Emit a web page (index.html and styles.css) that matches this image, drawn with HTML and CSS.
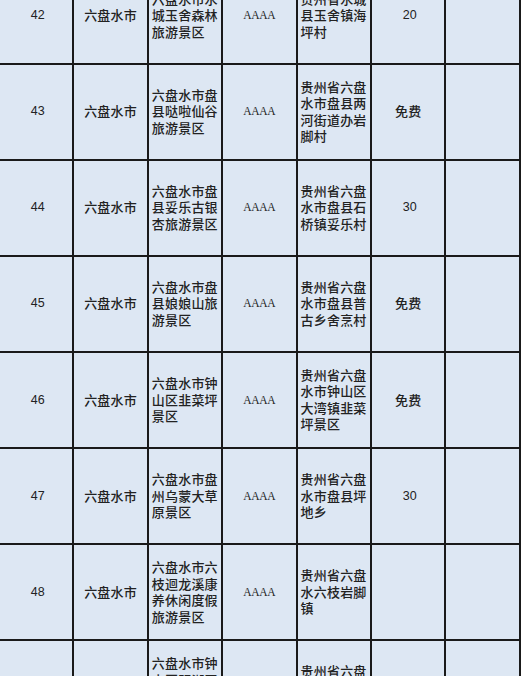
FILE: index.html
```html
<!DOCTYPE html>
<html lang="zh-CN">
<head>
<meta charset="utf-8">
<title>贵州省4A级旅游景区</title>
<link rel="stylesheet" href="styles.css">
</head>
<body>
<div class="sheet">
  <div class="cell num">42</div>
  <div class="cell city">六盘水市</div>
  <div class="cell wrap">六盘水市水城玉舍森林旅游景区</div>
  <div class="cell grade">AAAA</div>
  <div class="cell wrap">贵州省水城县玉舍镇海坪村</div>
  <div class="cell num">20</div>
  <div class="cell"></div>

  <div class="cell num">43</div>
  <div class="cell city">六盘水市</div>
  <div class="cell wrap">六盘水市盘县哒啦仙谷旅游景区</div>
  <div class="cell grade">AAAA</div>
  <div class="cell wrap">贵州省六盘水市盘县两河街道办岩脚村</div>
  <div class="cell city">免费</div>
  <div class="cell"></div>

  <div class="cell num">44</div>
  <div class="cell city">六盘水市</div>
  <div class="cell wrap">六盘水市盘县妥乐古银杏旅游景区</div>
  <div class="cell grade">AAAA</div>
  <div class="cell wrap">贵州省六盘水市盘县石桥镇妥乐村</div>
  <div class="cell num">30</div>
  <div class="cell"></div>

  <div class="cell num">45</div>
  <div class="cell city">六盘水市</div>
  <div class="cell wrap">六盘水市盘县娘娘山旅游景区</div>
  <div class="cell grade">AAAA</div>
  <div class="cell wrap">贵州省六盘水市盘县普古乡舍烹村</div>
  <div class="cell city">免费</div>
  <div class="cell"></div>

  <div class="cell num">46</div>
  <div class="cell city">六盘水市</div>
  <div class="cell wrap">六盘水市钟山区韭菜坪景区</div>
  <div class="cell grade">AAAA</div>
  <div class="cell wrap">贵州省六盘水市钟山区大湾镇韭菜坪景区</div>
  <div class="cell city">免费</div>
  <div class="cell"></div>

  <div class="cell num">47</div>
  <div class="cell city">六盘水市</div>
  <div class="cell wrap">六盘水市盘州乌蒙大草原景区</div>
  <div class="cell grade">AAAA</div>
  <div class="cell wrap">贵州省六盘水市盘县坪地乡</div>
  <div class="cell num">30</div>
  <div class="cell"></div>

  <div class="cell num">48</div>
  <div class="cell city">六盘水市</div>
  <div class="cell wrap">六盘水市六枝迴龙溪康养休闲度假旅游景区</div>
  <div class="cell grade">AAAA</div>
  <div class="cell wrap">贵州省六盘水六枝岩脚镇</div>
  <div class="cell"></div>
  <div class="cell"></div>

  <div class="cell num">49</div>
  <div class="cell city">六盘水市</div>
  <div class="cell wrap">六盘水市钟山区明湖国家湿地公园景区</div>
  <div class="cell grade">AAAA</div>
  <div class="cell wrap">贵州省六盘水市钟山区荷城街道</div>
  <div class="cell"></div>
  <div class="cell"></div>
</div>
</body>
</html>
```
FILE: styles.css
```css
html, body {
  margin: 0;
  padding: 0;
  overflow: hidden;
  background: #1a1a1a;
}

.sheet {
  display: grid;
  grid-template-columns: repeat(7, 72.4px);
  grid-auto-rows: 94.1px;
  gap: 2px;
  width: 520.8px;
  margin-top: -31.6px;
  background: #1a1a1a;
  padding-right: 2px;
}

.cell {
  background: #dde7f3;
  display: flex;
  align-items: center;
  justify-content: center;
  font-family: "Noto Sans CJK SC", "Noto Sans", sans-serif;
  font-weight: 500;
  font-size: 13px;
  letter-spacing: 0.2px;
  line-height: 16.5px;
  color: #222;
}

.wrap {
  justify-content: flex-start;
  padding: 0 3px;
  text-align: left;
}

.num {
  font-family: "Liberation Sans", Arial, sans-serif;
  font-weight: 400;
  font-size: 12.5px;
  letter-spacing: 0;
  padding-left: 3px;
  color: #222;
}

.city {
  text-align: center;
}

.grade {
  font-family: "Liberation Serif", "Times New Roman", serif;
  font-weight: 400;
  font-size: 11.5px;
  letter-spacing: -0.3px;
  color: #1e1e1e;
}
```
